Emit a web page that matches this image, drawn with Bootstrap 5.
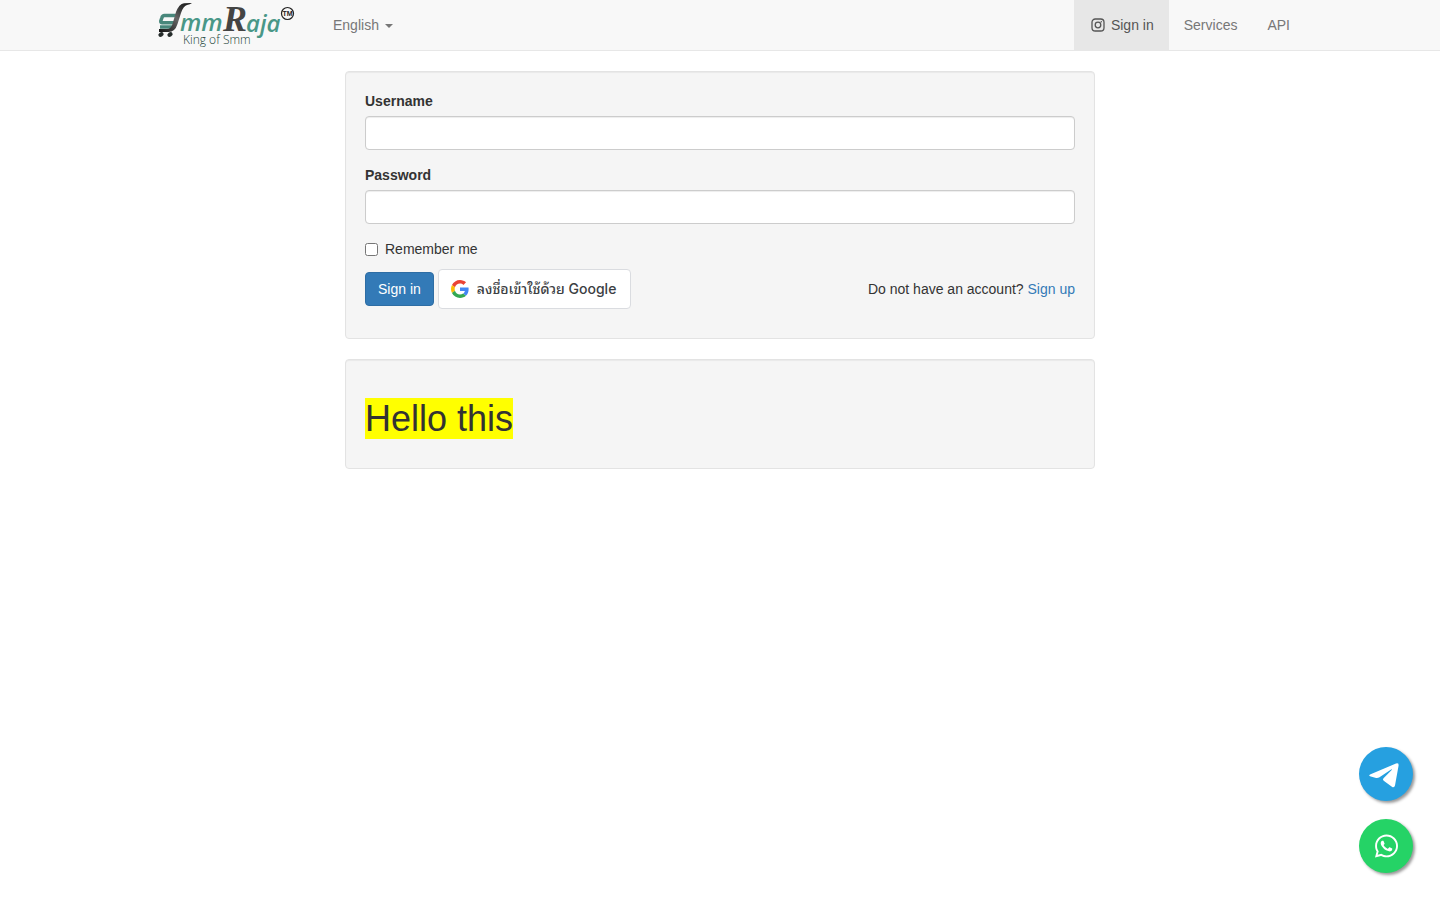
<!DOCTYPE html>
<html lang="en">
<head>
<meta charset="utf-8">
<meta name="viewport" content="width=device-width, initial-scale=1">
<title>Sign in - SmmRaja</title>
<link href="https://cdn.jsdelivr.net/npm/bootstrap@5.3.0/dist/css/bootstrap.min.css" rel="stylesheet">
<style>
body { font: 14px/20px "Liberation Sans", Arial, sans-serif; color: #333; }
a { color: #337ab7; text-decoration: none; }
.container { max-width: 1170px; --bs-gutter-x: 30px; }
.row { --bs-gutter-x: 30px; }
.site-nav { background: #f8f8f8; border-bottom: 1px solid #e7e7e7; min-height: 51px; }
.site-nav .nav-link { color: #777; padding: 15px; font-size: 14px; line-height: 20px; }
.site-nav .nav-link.active { background: #e7e7e7; color: #555; }
.site-nav .dropdown-toggle::after { border-width: 4px 4px 0; margin-left: 6px; vertical-align: middle; }
.logo { padding: 0 22px; }
.panels { gap: 20px; padding-top: 20px; }
.panel-box { background: #f5f5f5; border: 1px solid #e3e3e3; border-radius: 4px; padding: 19px; box-shadow: inset 0 1px 1px rgba(0,0,0,.05); }
.panel-box .form-label { font-weight: 700; margin-bottom: 5px; display: block; }
.panel-box .form-control { height: 34px; font-size: 14px; border-color: #ccc; border-radius: 4px; box-shadow: inset 0 1px 1px rgba(0,0,0,.075); }
.field { margin-bottom: 15px; }
.remember { gap: 7px; margin-bottom: 10px; }
.remember input { width: 13px; height: 13px; margin: 0; }
.actions { gap: 4px; margin-bottom: 10px; }
.btn-login { background: #337ab7; border: 1px solid #2e6da4; color: #fff; font-size: 14px; line-height: 20px; padding: 6px 12px; border-radius: 4px; }
.btn-google { height: 40px; background: #fff; border: 1px solid #dadce0; border-radius: 4px; color: #3c4043; font: 500 14px/20px Inter, "Noto Sans Thai Looped", "Leelawadee UI", Loma, sans-serif; padding: 0 12px; gap: 8px; white-space: nowrap; min-width: 193px; }
.greeting { font-size: 36px; line-height: 40px; font-weight: 400; margin: 20px 0 10px; }
.greeting span { background: #ff0; }
.chat-links { right: 27px; bottom: 27px; gap: 18px; }
.chat-links a { width: 54px; height: 54px; border-radius: 50%; box-shadow: 2px 2px 3px #999; color: #fff; }
.telegram { background: #26a0e0; }
.whatsapp { background: #25d366; }
</style>
</head>
<body>
<nav class="site-nav">
  <div class="container d-flex flex-wrap px-0">
    <a class="logo" href="#" aria-label="SmmRaja, King of Smm">
      <svg class="d-block" width="139" height="50" viewBox="0 0 139 50">
        <defs><linearGradient id="steel" x1="0" y1="1" x2="1" y2="0"><stop offset="0" stop-color="#111"/><stop offset=".5" stop-color="#666"/><stop offset=".75" stop-color="#333"/><stop offset="1" stop-color="#111"/></linearGradient></defs>
        <path d="M21 15.500H7.500q-2 0-2.700 2.500l-1 3q-.3 1.800 1.500 1.800H17M3 27h13" fill="none" stroke="#48877b" stroke-width="3.500"/>
        <path d="M35 3q-2 1.500-5 2-4 1.500-6 8l-3.500 11q-2.500 8-9 8H2v-3h8q4 0 5.500-5l3.500-12Q22 4 27 3.200z" fill="url(#steel)"/>
        <ellipse cx="4" cy="34.500" rx="2.800" ry="2.200" fill="#252b2a" transform="rotate(-35 4 34.500)"/><ellipse cx="13" cy="34.500" rx="2.800" ry="2.200" fill="#252b2a" transform="rotate(-35 13 34.500)"/>
        <g fill="#499787" font-family="Open Sans, sans-serif" font-style="italic" font-weight="600">
          <text x="23" y="31" font-size="24">mm</text><text x="89" y="32" font-size="24">aja</text>
        </g>
        <text x="66" y="31" font-family="Liberation Serif, serif" font-size="36" font-weight="700" font-style="italic" fill="#444">R</text>
        <circle cx="130.500" cy="13.500" r="6" fill="none" stroke="#222" stroke-width="1.200"/>
        <text x="130.500" y="16" text-anchor="middle" font-family="Liberation Sans, sans-serif" font-size="7" font-weight="700" fill="#222">TM</text>
        <text x="26" y="44" font-family="Open Sans, sans-serif" font-weight="300" font-size="12" fill="#173f37">King of Smm</text>
      </svg>
    </a>
    <ul class="nav">
      <li class="nav-item dropdown"><a class="nav-link dropdown-toggle" href="#" data-bs-toggle="dropdown">English</a>
        <ul class="dropdown-menu"><li><a class="dropdown-item" href="#">English</a></li></ul></li>
    </ul>
    <ul class="nav ms-auto">
      <li class="nav-item"><a class="nav-link active d-flex align-items-center" href="#">
        <svg class="me-1" width="18" height="14" viewBox="0 0 18 14" fill="none" stroke="currentColor" stroke-width="1.300"><rect x="3" y="1" width="12" height="12" rx="3.300"/><circle cx="9" cy="7" r="2.800"/><circle cx="12.300" cy="3.700" r=".7" fill="currentColor" stroke="none"/></svg>Sign in</a></li>
      <li class="nav-item"><a class="nav-link" href="#">Services</a></li>
      <li class="nav-item"><a class="nav-link" href="#">API</a></li>
    </ul>
  </div>
</nav>
<main class="container">
  <div class="row">
    <div class="panels col-md-8 offset-md-2 d-grid">
      <form class="panel-box">
        <div class="field"><label class="form-label" for="username">Username</label><input class="form-control" id="username" type="text"></div>
        <div class="field"><label class="form-label" for="password">Password</label><input class="form-control" id="password" type="password"></div>
        <div class="remember d-flex align-items-center"><input id="remember" type="checkbox"><label for="remember">Remember me</label></div>
        <div class="actions d-flex flex-wrap align-items-center">
          <button class="btn-login" type="submit">Sign in</button>
          <button class="btn-google d-flex align-items-center" type="button">
            <svg class="flex-shrink-0" width="18" height="18" viewBox="0 0 48 48"><path fill="#EA4335" d="M24 9.5c3.54 0 6.71 1.22 9.21 3.6l6.85-6.85C35.9 2.38 30.47 0 24 0 14.62 0 6.51 5.38 2.56 13.22l7.98 6.19C12.43 13.72 17.74 9.5 24 9.5z"/><path fill="#4285F4" d="M46.98 24.55c0-1.57-.15-3.09-.38-4.55H24v9.02h12.94c-.58 2.96-2.26 5.48-4.78 7.18l7.73 6c4.51-4.18 7.09-10.36 7.09-17.65z"/><path fill="#FBBC05" d="M10.53 28.59c-.48-1.45-.76-2.99-.76-4.59s.27-3.14.76-4.59l-7.98-6.19C.92 16.46 0 20.12 0 24c0 3.88.92 7.54 2.56 10.78l7.97-6.19z"/><path fill="#34A853" d="M24 48c6.48 0 11.93-2.13 15.89-5.81l-7.73-6c-2.15 1.45-4.92 2.3-8.16 2.3-6.26 0-11.57-4.22-13.47-9.91l-7.98 6.19C6.51 42.62 14.62 48 24 48z"/></svg>
            <span>ลงชื่อเข้าใช้ด้วย Google</span>
          </button>
          <div class="ms-auto">Do not have an account? <a href="#">Sign up</a></div>
        </div>
      </form>
      <section class="panel-box"><h1 class="greeting"><span>Hello this</span></h1></section>
    </div>
  </div>
</main>
<div class="chat-links position-fixed d-flex flex-column">
  <a class="telegram d-flex align-items-center justify-content-center" href="#" aria-label="Telegram">
    <svg width="54" height="54" viewBox="0 0 54 54" fill="#fff"><path d="M11 27.500 37 16.500q3-1 2.600 2L36 38.500q-.7 2.800-3.100 1.300l-8.200-6q-1.500-1.200-.2-2.600l8.200-8.200q.7-1.100-.6-.5L20.500 30.200q-2 1.200-4.300.5L11 29.300q-1.800-.9 0-1.800z"/></svg></a>
  <a class="whatsapp d-flex align-items-center justify-content-center" href="#" aria-label="WhatsApp">
    <svg width="23" height="26" viewBox="0 32 448 448" fill="#fff"><path d="M380.9 97.1C339 55.1 283.2 32 223.9 32c-122.4 0-222 99.6-222 222 0 39.1 10.2 77.3 29.6 111L0 480l117.7-30.9c32.4 17.7 68.9 27 106.1 27h.1c122.3 0 224.1-99.6 224.1-222 0-59.3-25.2-115-67.1-157zm-157 341.6c-33.2 0-65.7-8.9-94-25.7l-6.7-4-69.8 18.3L72 359.2l-4.4-7c-18.5-29.4-28.2-63.3-28.2-98.2 0-101.7 82.8-184.5 184.6-184.5 49.3 0 95.6 19.2 130.4 54.1 34.8 34.9 56.2 81.2 56.1 130.5 0 101.8-84.9 184.6-186.6 184.6zm101.2-138.2c-5.5-2.8-32.8-16.2-37.9-18-5.1-1.9-8.8-2.8-12.5 2.8-3.7 5.6-14.3 18-17.6 21.8-3.2 3.7-6.5 4.2-12 1.4-32.6-16.3-54-29.1-75.5-66-5.7-9.8 5.7-9.1 16.3-30.3 1.8-3.7.9-6.9-.5-9.7-1.4-2.8-12.5-30.1-17.1-41.2-4.5-10.8-9.1-9.3-12.5-9.5-3.2-.2-6.9-.2-10.6-.2-3.7 0-9.7 1.4-14.8 6.9-5.1 5.6-19.4 19-19.4 46.3 0 27.3 19.9 53.7 22.6 57.4 2.8 3.7 39.1 59.7 94.8 83.8 35.2 15.2 49 16.5 66.6 13.9 10.7-1.6 32.8-13.4 37.4-26.4 4.6-13 4.6-24.1 3.2-26.4-1.3-2.5-5-3.9-10.5-6.6z"/></svg></a>
</div>
<script src="https://cdn.jsdelivr.net/npm/bootstrap@5.3.0/dist/js/bootstrap.bundle.min.js"></script>
</body>
</html>
